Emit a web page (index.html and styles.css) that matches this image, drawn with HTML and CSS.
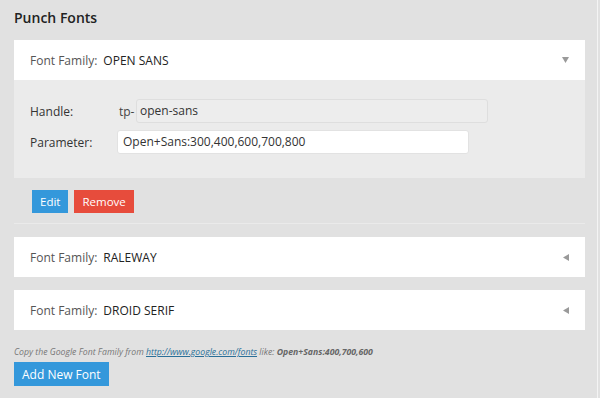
FILE: index.html
```html
<!DOCTYPE html>
<html lang="en">
<head>
    <meta charset="UTF-8">
    <title>Punch Fonts</title>
    <link rel="stylesheet" href="styles.css">
</head>
<body>
    <div class="page">
        <h2 class="title">Punch Fonts</h2>

        <!-- Open panel -->
        <div class="font-panel">
            <div class="panel-head">
                <span class="label">Font Family:</span>
                <span class="family">OPEN SANS</span>
                <svg class="arrow" width="7" height="6" viewBox="0 0 7 6"><path d="M0 0h7L3.5 6z"></path></svg>
            </div>
            <div class="panel-body">
                <div class="field">
                    <span class="field-label">Handle:</span>
                    <span class="prefix">tp-</span>
                    <div class="input readonly">open-sans</div>
                </div>
                <div class="field">
                    <span class="field-label">Parameter:</span>
                    <div class="input">Open+Sans:300,400,600,700,800</div>
                </div>
            </div>
            <div class="panel-actions">
                <button class="btn btn-blue">Edit</button>
                <button class="btn btn-red">Remove</button>
            </div>
        </div>

        <!-- Closed panels -->
        <div class="font-panel closed">
            <div class="panel-head">
                <span class="label">Font Family:</span>
                <span class="family">RALEWAY</span>
                <svg class="arrow" width="6" height="7" viewBox="0 0 6 7"><path d="M6 0v7L0 3.5z"></path></svg>
            </div>
        </div>
        <div class="font-panel closed">
            <div class="panel-head">
                <span class="label">Font Family:</span>
                <span class="family">DROID SERIF</span>
                <svg class="arrow" width="6" height="7" viewBox="0 0 6 7"><path d="M6 0v7L0 3.5z"></path></svg>
            </div>
        </div>

        <p class="hint">Copy the Google Font Family from <a href="#">http://www.google.com/fonts</a> like: <b>Open+Sans:400,700,600</b></p>
        <button class="btn btn-blue btn-add">Add New Font</button>
    </div>
</body>
</html>
```
FILE: styles.css
```css
body {
    margin: 0;
    background: #e1e1e1;
    font-family: "Open Sans", "Noto Sans", Arial, sans-serif;
    color: #444;
}

.page {
    width: 571px;
    height: 398px;
    padding: 0 12px 0 14px;
    border-right: 1px solid #f4f4f4;
    box-sizing: content-box;
}

.title {
    margin: 0;
    padding-top: 8px;
    font-size: 14px;
    line-height: 20px;
    font-weight: 600;
    color: #222;
}

.font-panel {
    margin-top: 12px;
}

.font-panel.closed {
    margin-top: 13px;
}

.panel-head {
    display: flex;
    align-items: center;
    height: 40px;
    padding: 0 16px;
    background: #fff;
    font-size: 12px;
}

.panel-head .label {
    color: #555;
}

.panel-head .family {
    margin-left: 6px;
    color: #222;
    font-weight: 500;
}

.arrow {
    margin-left: auto;
    fill: #9a9a9a;
}

.panel-body {
    background: #ebebeb;
    padding: 19px 16px 24px;
    display: flex;
    flex-direction: column;
    gap: 7px;
}

.field {
    display: flex;
    align-items: center;
    font-size: 12px;
}

.field-label {
    width: 87px;
    color: #333;
    font-weight: 500;
}

.prefix {
    width: 17px;
    margin-left: 2px;
    color: #444;
}

.input {
    width: 352px;
    height: 24px;
    box-sizing: border-box;
    border: 1px solid #e2e2e2;
    border-radius: 3px;
    background: #fff;
    padding: 0 5px;
    line-height: 22px;
    font-size: 12px;
    color: #333;
}

.input.readonly {
    background: #ededed;
    border-color: #dedede;
    padding-left: 3px;
}

.panel-actions {
    display: flex;
    gap: 6px;
    padding: 12px 18px 10px;
    border-bottom: 1px solid #eaeaea;
}

.btn {
    border: none;
    height: 23px;
    padding: 0 8px;
    font-family: inherit;
    font-size: 11.5px;
    color: #fff;
    cursor: pointer;
}

.btn-blue {
    background: #3498db;
}

.btn-red {
    background: #e74c3c;
}

.hint {
    margin: 16px 0 0;
    font-size: 8.7px;
    font-style: italic;
    color: #777;
    line-height: 12px;
}

.hint a {
    color: #2a6f98;
}

.hint b {
    color: #666;
}

.btn-add {
    margin-top: 4px;
    height: 24px;
    font-size: 12px;
    padding: 0 8px;
}
```
